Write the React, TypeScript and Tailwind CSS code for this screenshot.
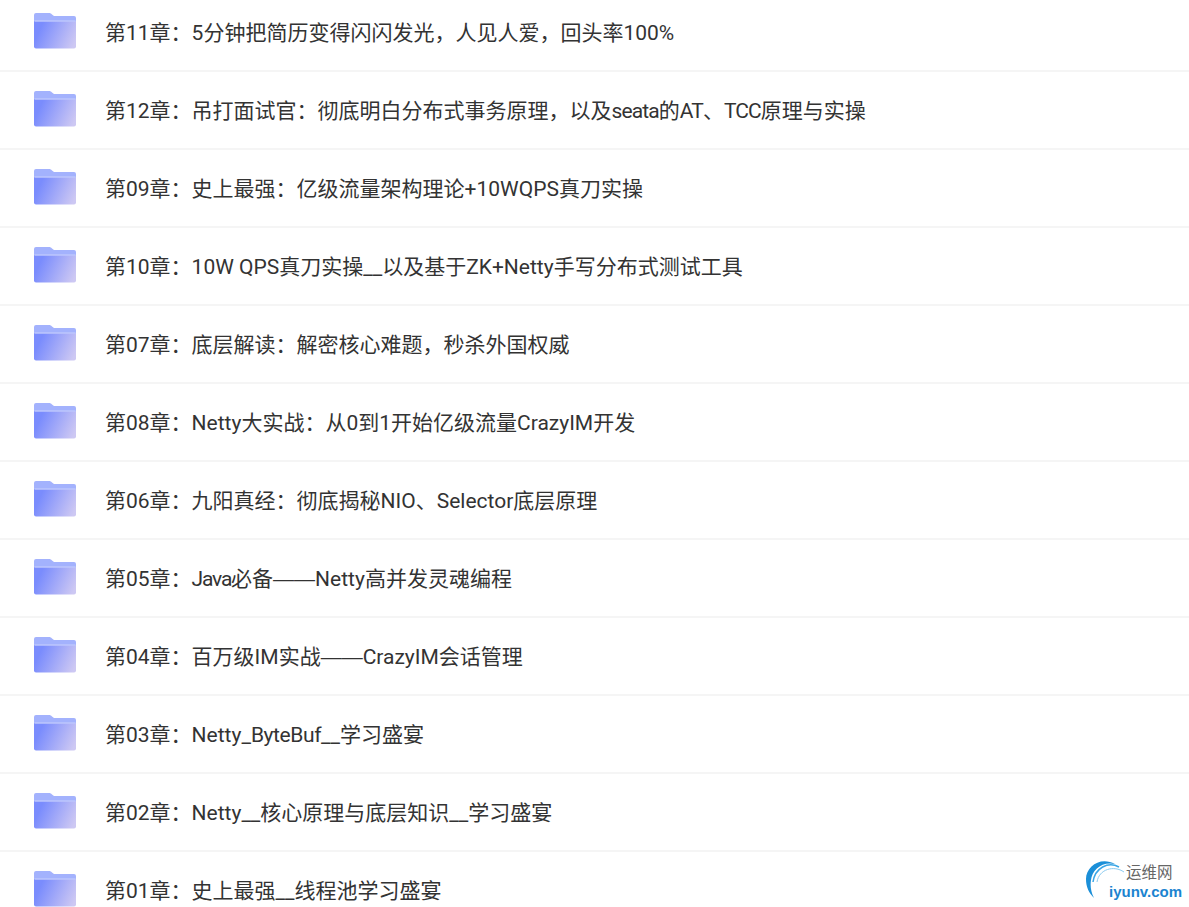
const chapters = [
  '第11章：5分钟把简历变得闪闪发光，人见人爱，回头率100%',
  '第12章：吊打面试官：彻底明白分布式事务原理，以及seata的AT、TCC原理与实操',
  '第09章：史上最强：亿级流量架构理论+10WQPS真刀实操',
  '第10章：10W QPS真刀实操__以及基于ZK+Netty手写分布式测试工具',
  '第07章：底层解读：解密核心难题，秒杀外国权威',
  '第08章：Netty大实战：从0到1开始亿级流量CrazyIM开发',
  '第06章：九阳真经：彻底揭秘NIO、Selector底层原理',
  '第05章：Java必备——Netty高并发灵魂编程',
  '第04章：百万级IM实战——CrazyIM会话管理',
  '第03章：Netty_ByteBuf__学习盛宴',
  '第02章：Netty__核心原理与底层知识__学习盛宴',
  '第01章：史上最强__线程池学习盛宴',
];

function segmentClass(part: string) {
  if (part === '——') return "font-['Liberation_Sans',sans-serif]";
  if (part === 'ByteBuf') return 'tracking-[-0.4px]';
  if (part === 'Java') return 'tracking-[-1.2px]';
  if (part === 'seata' || part === 'AT' || part === 'TCC') return 'tracking-[-0.9px]';
  return undefined;
}

function Title({ text }: { text: string }) {
  const parts = text.split(/(——|seata|AT|TCC|ByteBuf|Java)/);
  return (
    <span className="ml-[29px] mt-[2px] font-['Roboto','Noto_Sans_CJK_SC',sans-serif] text-[21px] leading-[28px] text-[#333]">
      {parts.map((part, i) => (
        <span key={i} className={segmentClass(part)}>{part}</span>
      ))}
    </span>
  );
}

function FolderIcon({ id }: { id: number }) {
  return (
    <svg width="42" height="36" viewBox="0 0 42 36" className="mb-[2px] shrink-0">
      <defs>
        <linearGradient id={`front-${id}`} x1="0" y1="0.4" x2="1" y2="0.7">
          <stop offset="0.1" stopColor="#7a8cfd" />
          <stop offset="1" stopColor="#cdc8f3" />
        </linearGradient>
      </defs>
      <path d="M0 2a2 2 0 0 1 2-2h13c1.500 0 2 .5 3 1.500L20 3h20a2 2 0 0 1 2 2v6H0z" fill="#a3b2fd" />
      <path d="M0 8h42v25.500a2 2 0 0 1-2 2H2a2 2 0 0 1-2-2z" fill={`url(#front-${id})`} />
      <path d="M0.500 8h41" stroke="#bcc6fd" strokeWidth="1.500" />
    </svg>
  );
}

function Logo() {
  return (
    <div className="absolute right-[4px] bottom-[5px] h-[44px] w-[100px]">
      <svg width="42" height="42" viewBox="0 0 42 42" className="absolute left-0 top-0">
        <path d="M30 6C16 -2 1 8 1 21C1 29 4 35 9 40C6 34 5 28 6 22C7 12 17 3 30 6z" fill="#1b8fd8" />
        <path d="M34 9C23 3 10 10 8 24" fill="none" stroke="#3aa6e6" strokeWidth="1.500" />
        <path d="M39 14C29 7 14 11 12 24" fill="none" stroke="#8ccbf0" strokeWidth="1" />
      </svg>
      <span className="absolute left-[41px] top-[3px] text-[15.500px] leading-[20px] text-[#666]">运维网</span>
      <span className="absolute left-[24px] top-[24px] font-['Liberation_Sans',sans-serif] text-[15px] font-bold leading-[20px] text-[#1b84d0]">iyunv.com</span>
    </div>
  );
}

export default function App() {
  return (
    <div className="relative h-[907px] overflow-hidden bg-white font-['Noto_Sans_CJK_SC',sans-serif]">
      <div className="-mt-[6px] flex flex-col">
        {chapters.map((title, i) => (
          <div key={title} className="flex h-[78px] shrink-0 items-center border-b-2 border-[#f5f5f5] pl-[34px]">
            <FolderIcon id={i} />
            <Title text={title} />
          </div>
        ))}
      </div>
      <Logo />
    </div>
  );
}
